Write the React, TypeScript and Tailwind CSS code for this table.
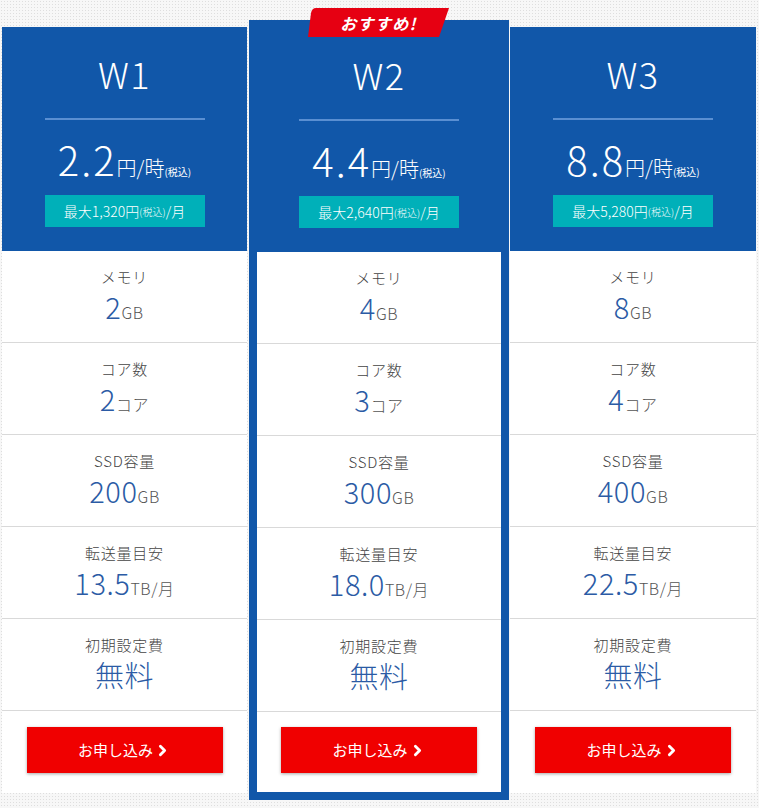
import { ChevronRight } from 'lucide-react'

interface Plan {
  name: string
  price: string
  monthly: string
  memory: string
  cores: string
  ssd: string
  transfer: string
  featured?: boolean
}

const PLANS: Plan[] = [
  { name: 'W1', price: '2.2', monthly: '1,320', memory: '2', cores: '2', ssd: '200', transfer: '13.5' },
  { name: 'W2', price: '4.4', monthly: '2,640', memory: '4', cores: '3', ssd: '300', transfer: '18.0', featured: true },
  { name: 'W3', price: '8.8', monthly: '5,280', memory: '8', cores: '4', ssd: '400', transfer: '22.5' },
]

function SpecRow({ label, value, unit }: { label: string; value: string; unit?: string }) {
  return (
    <div className="h-[92px] border-b border-[#d9d9d9] flex flex-col items-center pt-[16px]">
      <p className="text-[15px] leading-[20px] font-light text-[#444444] tracking-[0.05em]">{label}</p>
      <p className="mt-[3px] text-[29px] leading-[32px] font-light text-[#2b5ba5] tracking-[0.02em]">
        {value}
        {unit && <span className="text-[16px] leading-none text-[#555555] font-light">{unit}</span>}
      </p>
    </div>
  )
}

function RecommendBadge() {
  return (
    <div className="absolute left-[51px] top-[-20px] w-[141px] h-[29px]">
      <svg width="141" height="29" viewBox="0 0 141 29" className="absolute inset-0">
        <path d="M8 0 H141 L131 29 H0 L3 5 Q4 0 8 0 Z" fill="#e60012" />
      </svg>
      <span className="relative flex h-full items-center justify-center text-[16px] font-bold italic text-white tracking-[0.08em]">
        おすすめ!
      </span>
    </div>
  )
}

function PlanColumn({ plan }: { plan: Plan }) {
  const outer = plan.featured
    ? 'relative ml-[2px] mt-[20px] w-[260px] border-8 border-[#1157a9] bg-white'
    : plan.name === 'W1'
      ? 'ml-[2px] mt-[27px] w-[245px] bg-white'
      : 'ml-[1px] mt-[27px] w-[246px] bg-white'

  return (
    <div className={outer}>
      {plan.featured && <RecommendBadge />}

      {/* Header */}
      <div className="h-[224px] bg-[#1157a9] flex flex-col items-center text-white">
        <h2 className="pt-[28px] text-[36px] leading-none font-light tracking-[0.04em]">{plan.name}</h2>
        <div className="mt-[27px] h-[2px] w-[160px] bg-[#5a8fd2]" />
        <p className="mt-[19px] leading-none whitespace-nowrap">
          <span className="text-[40px] font-light tracking-[0.05em]">{plan.price}</span>
          <span className="text-[20px] font-light">円/時</span>
          <span className="text-[10px]">(税込)</span>
        </p>
        <div className="mt-[16px] h-[32px] w-[160px] bg-[#00b0b9] flex items-center justify-center whitespace-nowrap font-light">
          <span className="text-[14px]">最大{plan.monthly}円</span>
          <span className="text-[10px]">(税込)</span>
          <span className="text-[14px]">/月</span>
        </div>
      </div>

      {/* Specs */}
      <SpecRow label="メモリ" value={plan.memory} unit="GB" />
      <SpecRow label="コア数" value={plan.cores} unit="コア" />
      <SpecRow label="SSD容量" value={plan.ssd} unit="GB" />
      <SpecRow label="転送量目安" value={plan.transfer} unit="TB/月" />
      <SpecRow label="初期設定費" value="無料" />

      {/* Apply */}
      <div className={plan.featured ? 'flex justify-center pt-[15px] pb-[19px]' : 'flex justify-center pt-[16px] pb-[20px]'}>
        <button className="h-[46px] w-[196px] bg-[#f00000] text-white text-[15px] flex items-center justify-center gap-[1px] shadow-[0_1px_3px_rgba(0,0,0,0.35)]">
          お申し込み
          <ChevronRight size={17} strokeWidth={4} className="mt-[1px]" />
        </button>
      </div>
    </div>
  )
}

export default function App() {
  return (
    <div
      className="min-h-screen w-full bg-[#f7f7f7] bg-[radial-gradient(circle,#dedede_0.8px,transparent_1px)] bg-[size:3px_3px]"
      style={{ fontFamily: '"Noto Sans CJK JP", "Noto Sans", sans-serif' }}
    >
      <div className="flex items-start">
        {PLANS.map(p => (
          <PlanColumn key={p.name} plan={p} />
        ))}
      </div>
    </div>
  )
}
